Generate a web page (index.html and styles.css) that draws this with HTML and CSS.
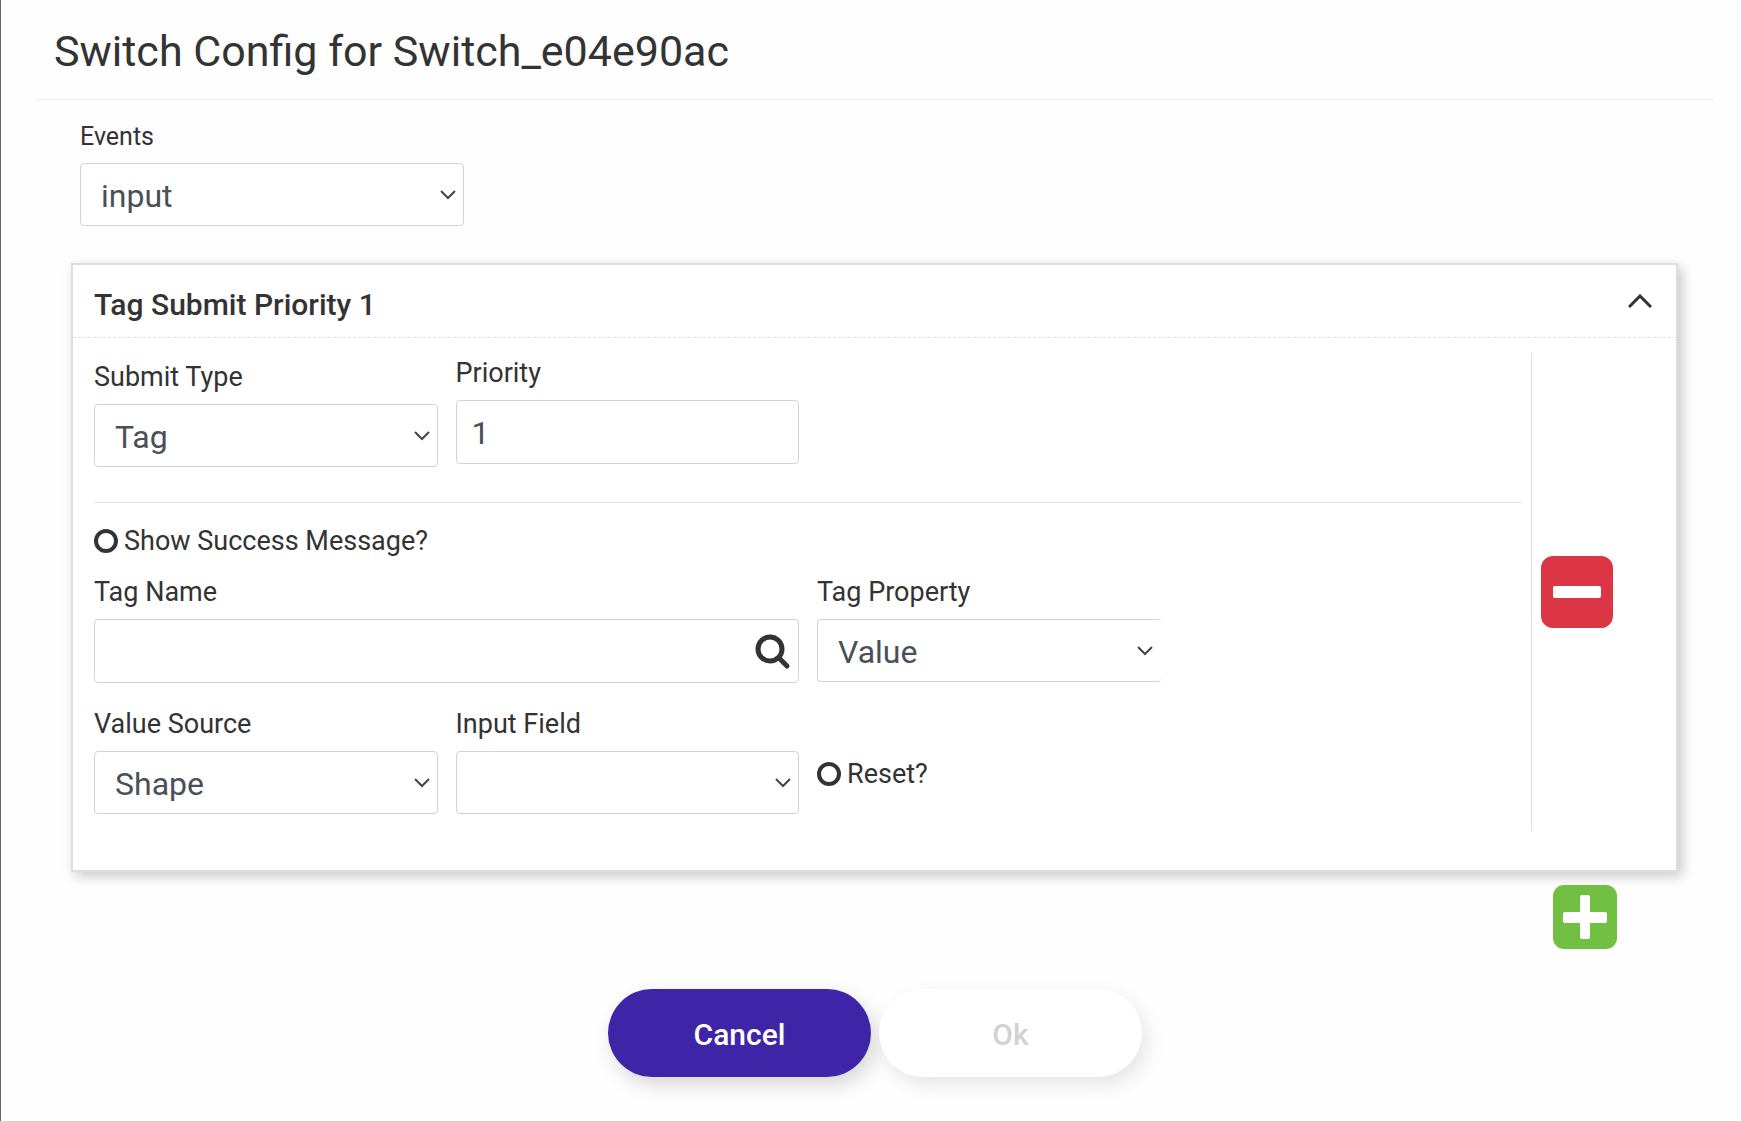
FILE: index.html
```html
<!DOCTYPE html>
<html lang="en">
<head>
    <meta charset="UTF-8">
    <meta name="viewport" content="width=device-width, initial-scale=1.0">
    <title>Switch Config</title>
    <link rel="stylesheet" href="styles.css">
</head>
<body>
    <div class="dialog">
        <div class="dialog-header">
            <h1>Switch Config for Switch_e04e90ac</h1>
        </div>
        <div class="dialog-body">
            <div class="events">
                <label for="events">Events</label>
                <div class="select-wrap">
                    <select id="events">
                        <option>input</option>
                    </select>
                    <svg class="arrow" viewBox="0 0 16 10"><path d="M1 1 L8 8 L15 1"/></svg>
                </div>
            </div>

            <div class="card">
                <div class="card-header">
                    <h2>Tag Submit Priority 1</h2>
                    <button type="button" class="collapse" aria-label="Collapse">
                        <svg viewBox="0 0 24 14"><path d="M1 13 L12 2 L23 13"/></svg>
                    </button>
                </div>
                <div class="card-body">
                    <div class="fields">
                        <div class="row">
                            <div class="field submit-type">
                                <label for="submit-type">Submit Type</label>
                                <div class="select-wrap">
                                    <select id="submit-type">
                                        <option>Tag</option>
                                    </select>
                                    <svg class="arrow" viewBox="0 0 16 10"><path d="M1 1 L8 8 L15 1"/></svg>
                                </div>
                            </div>
                            <div class="field">
                                <label for="priority">Priority</label>
                                <input type="text" id="priority" value="1">
                            </div>
                        </div>
                        <hr>
                        <div class="check">
                            <input type="checkbox" id="show-success">
                            <label for="show-success">Show Success Message?</label>
                        </div>
                        <div class="row row-tag">
                            <div class="field wide">
                                <label for="tag-name">Tag Name</label>
                                <div class="search-wrap">
                                    <input type="text" id="tag-name">
                                    <button type="button" class="search" aria-label="Search">
                                        <svg viewBox="0 0 36 36"><circle cx="15" cy="15" r="12"/><path d="M24 24 L32 32"/></svg>
                                    </button>
                                </div>
                            </div>
                            <div class="field">
                                <label for="tag-property">Tag Property</label>
                                <div class="select-wrap">
                                    <select id="tag-property" class="clipped">
                                        <option>Value</option>
                                    </select>
                                    <svg class="arrow" viewBox="0 0 16 10"><path d="M1 1 L8 8 L15 1"/></svg>
                                </div>
                            </div>
                        </div>
                        <div class="row row-value">
                            <div class="field">
                                <label for="value-source">Value Source</label>
                                <div class="select-wrap">
                                    <select id="value-source">
                                        <option>Shape</option>
                                    </select>
                                    <svg class="arrow" viewBox="0 0 16 10"><path d="M1 1 L8 8 L15 1"/></svg>
                                </div>
                            </div>
                            <div class="field">
                                <label for="input-field">Input Field</label>
                                <div class="select-wrap">
                                    <select id="input-field">
                                        <option></option>
                                    </select>
                                    <svg class="arrow" viewBox="0 0 16 10"><path d="M1 1 L8 8 L15 1"/></svg>
                                </div>
                            </div>
                            <div class="check reset">
                                <input type="checkbox" id="reset">
                                <label for="reset">Reset?</label>
                            </div>
                        </div>
                    </div>
                    <div class="remove-col">
                        <button type="button" class="icon-button remove" aria-label="Remove">
                            <svg viewBox="0 0 72 72"><rect x="12" y="30" width="48" height="12" rx="2"/></svg>
                        </button>
                    </div>
                </div>
            </div>

            <div class="add-row">
                <button type="button" class="icon-button add" aria-label="Add">
                    <svg viewBox="0 0 64 64"><rect x="10" y="27" width="44" height="11" rx="2"/><rect x="27" y="10" width="10" height="44" rx="2"/></svg>
                </button>
            </div>
        </div>
        <div class="dialog-footer">
            <button type="button" class="btn btn-primary">Cancel</button>
            <button type="button" class="btn" disabled>Ok</button>
        </div>
    </div>
</body>
</html>
```

FILE: styles.css
```css
* {
    box-sizing: border-box;
}
body {
    margin: 0;
    min-height: 100vh;
    border-left: 1px solid #666;
    background-color: #fefefe;
    color: #333;
    font-family: Roboto, 'Liberation Sans', sans-serif;
    font-size: 27px;
}
button, input, select {
    font-family: inherit;
    margin: 0;
}
button {
    cursor: pointer;
}
.dialog {
    padding: 0 27px 0 35px;
}
.dialog-header {
    padding: 25px 18px 22px;
    border-bottom: 1px solid #f0f0f0;
}
.dialog-header h1 {
    margin: 0;
    font-size: 43px;
    line-height: 52px;
    font-weight: 400;
}
.dialog-body {
    padding: 17px 36px 0 35px;
}
.events {
    width: 384px;
    margin: 0 0 37px 9px;
}
.events label {
    font-size: 25px;
    margin-bottom: 6px;
}
label {
    display: block;
    line-height: 40px;
    margin-bottom: 7px;
}
select, input[type="text"] {
    display: block;
    width: 100%;
    height: 64px;
    padding: 2px 15px 0;
    border: 1px solid #ced4da;
    border-radius: 4px;
    background-color: #fff;
    color: #495057;
    font-size: 32px;
    outline: none;
}
select {
    appearance: none;
    height: 63px;
    padding: 2px 40px 0 20px;
}
select.clipped {
    border-right: none;
}
.select-wrap, .search-wrap {
    position: relative;
}
.arrow {
    position: absolute;
    top: 27px;
    right: 8px;
    width: 16px;
    height: 10px;
    fill: none;
    stroke: #444;
    stroke-width: 2;
    pointer-events: none;
}
.card {
    border: 2px solid #ddd;
    background-color: #fff;
    box-shadow: 4px 4px 12px rgba(0,0,0,0.22);
    padding-bottom: 39px;
}
.card-header {
    display: flex;
    justify-content: space-between;
    align-items: center;
    height: 73px;
    padding: 0 24px 0 21px;
    border-bottom: 1px dashed #e2e2e2;
}
.card-header h2 {
    margin: 0;
    padding-top: 6px;
    font-size: 30px;
    font-weight: 500;
}
.collapse {
    padding: 0;
    border: none;
    background: none;
}
.collapse svg {
    display: block;
    width: 24px;
    height: 14px;
    fill: none;
    stroke: #333;
    stroke-width: 3;
}
.card-body {
    display: flex;
    padding-top: 15px;
}
.fields {
    flex: 1;
    padding: 0 9px 17px 21px;
}
.row {
    display: grid;
    grid-template-columns: repeat(4, 1fr);
    column-gap: 18px;
}
.wide {
    grid-column: span 2;
}
.submit-type {
    padding-top: 4px;
}
hr {
    margin: 35px 0 18px;
    border: none;
    border-top: 1px solid #e2e2e2;
}
.check {
    display: flex;
    align-items: center;
    gap: 6px;
}
.check label {
    margin: 0;
}
.check input {
    appearance: none;
    width: 24px;
    height: 24px;
    border: 4px solid #333;
    border-radius: 50%;
}
.row-tag {
    margin-top: 11px;
}
.row-value {
    margin-top: 21px;
}
.reset {
    align-self: end;
    padding-bottom: 20px;
}
.search {
    position: absolute;
    top: 15px;
    right: 8px;
    padding: 0;
    border: none;
    background: none;
}
.search svg {
    display: block;
    width: 36px;
    height: 36px;
    fill: none;
    stroke: #333;
    stroke-width: 5;
    stroke-linecap: round;
}
.remove-col {
    display: flex;
    align-items: center;
    width: 145px;
    padding-left: 9px;
    border-left: 1px solid #ddd;
}
.icon-button {
    padding: 0;
    border: none;
}
.icon-button svg {
    display: block;
    width: 100%;
    height: 100%;
    fill: #fff;
}
.remove {
    width: 72px;
    height: 72px;
    border-radius: 12px;
    background-color: #dc3545;
}
.add {
    width: 64px;
    height: 64px;
    border-radius: 11px;
    background-color: #72c043;
}
.add-row {
    display: flex;
    justify-content: flex-end;
    padding: 13px 61px 0 0;
}
.dialog-footer {
    display: flex;
    justify-content: center;
    gap: 8px;
    padding: 40px 0;
}
.btn {
    width: 263px;
    height: 88px;
    padding-top: 3px;
    border: none;
    border-radius: 44px;
    background-color: #fff;
    color: #333;
    font-size: 30px;
    font-weight: 500;
    box-shadow: 5px 8px 20px rgba(0,0,0,0.1);
}
.btn:disabled {
    color: #d2d2d2;
    cursor: default;
}
.btn-primary {
    background-color: #3e25a7;
    color: #fff;
    box-shadow: 5px 8px 20px rgba(0,0,0,0.16);
}
```
